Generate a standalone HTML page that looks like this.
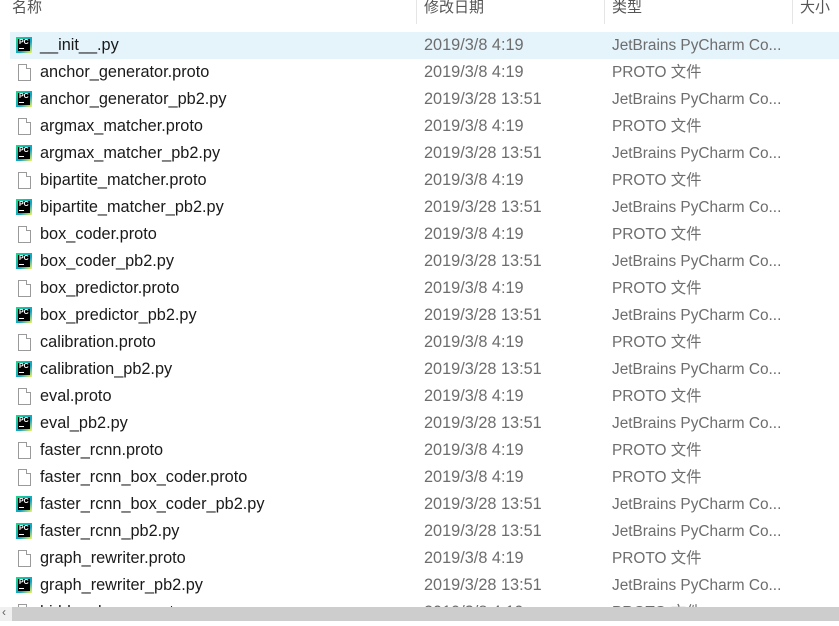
<!DOCTYPE html>
<html><head><meta charset="utf-8"><style>
*{margin:0;padding:0;box-sizing:border-box}
body{width:839px;height:621px;overflow:hidden;background:#fff;font-family:"Liberation Sans","Noto Sans CJK SC",sans-serif;font-size:16.3px;color:#333;position:relative}
.h{position:absolute;top:-1px;height:24px;color:#555;font-size:15px;line-height:18px}
.sep{position:absolute;top:0;width:1px;height:24px;background:#e5e5e5}
.r{position:absolute;left:0;width:839px;height:27px;line-height:27px;white-space:nowrap}
.r.sel{background:#e5f3fb;left:10px;width:829px}
.n{position:absolute;left:40px;color:#1a1a1a}
.sel .n{left:30px}.sel .d{left:414px}.sel .t{left:602px}.sel .ic{left:6px}
.d{position:absolute;left:424px;color:#6d6d6d}
.t{position:absolute;left:612px;color:#6d6d6d;font-size:15.4px}
.ic{position:absolute;left:16px;top:5px;width:16px;height:16px}
.pc{background:linear-gradient(135deg,#21d789,#0ea5c8 60%,#fcf84a);padding:2px}
.pc i{display:block;width:12px;height:12px;background:#000;color:#fff;font-size:7px;font-style:normal;font-weight:bold;line-height:8px;padding-left:1px;position:relative}
.pc i:after{content:"";position:absolute;left:1px;bottom:2px;width:5px;height:1px;background:#fff}
.fi{left:18px;width:13px;height:17px;border:1px solid #9a9a9a;background:#fff}
.fi:after{content:"";position:absolute;right:-1px;top:-1px;width:4px;height:4px;background:#fff;border-left:1px solid #9a9a9a;border-bottom:1px solid #9a9a9a}
.sb{position:absolute;left:0;top:607px;width:839px;height:14px;background:#f0f0f0}
.th{position:absolute;left:12px;top:607px;width:827px;height:14px;background:#cdcdcd}
.arr{position:absolute;left:2px;top:605px;font-size:12px;color:#606060}
</style></head><body>
<div class="h" style="left:12px">名称</div>
<div class="sep" style="left:416px"></div>
<div class="h" style="left:424px">修改日期</div>
<div class="sep" style="left:604px"></div>
<div class="h" style="left:612px">类型</div>
<div class="sep" style="left:792px"></div>
<div class="h" style="left:800px">大小</div>
<div class="r sel" style="top:32px"><span class="ic pc"><i>PC</i></span><span class="n">__init__.py</span><span class="d">2019/3/8 4:19</span><span class="t">JetBrains PyCharm Co...</span></div>
<div class="r" style="top:59px"><span class="ic fi"></span><span class="n">anchor_generator.proto</span><span class="d">2019/3/8 4:19</span><span class="t">PROTO 文件</span></div>
<div class="r" style="top:86px"><span class="ic pc"><i>PC</i></span><span class="n">anchor_generator_pb2.py</span><span class="d">2019/3/28 13:51</span><span class="t">JetBrains PyCharm Co...</span></div>
<div class="r" style="top:113px"><span class="ic fi"></span><span class="n">argmax_matcher.proto</span><span class="d">2019/3/8 4:19</span><span class="t">PROTO 文件</span></div>
<div class="r" style="top:140px"><span class="ic pc"><i>PC</i></span><span class="n">argmax_matcher_pb2.py</span><span class="d">2019/3/28 13:51</span><span class="t">JetBrains PyCharm Co...</span></div>
<div class="r" style="top:167px"><span class="ic fi"></span><span class="n">bipartite_matcher.proto</span><span class="d">2019/3/8 4:19</span><span class="t">PROTO 文件</span></div>
<div class="r" style="top:194px"><span class="ic pc"><i>PC</i></span><span class="n">bipartite_matcher_pb2.py</span><span class="d">2019/3/28 13:51</span><span class="t">JetBrains PyCharm Co...</span></div>
<div class="r" style="top:221px"><span class="ic fi"></span><span class="n">box_coder.proto</span><span class="d">2019/3/8 4:19</span><span class="t">PROTO 文件</span></div>
<div class="r" style="top:248px"><span class="ic pc"><i>PC</i></span><span class="n">box_coder_pb2.py</span><span class="d">2019/3/28 13:51</span><span class="t">JetBrains PyCharm Co...</span></div>
<div class="r" style="top:275px"><span class="ic fi"></span><span class="n">box_predictor.proto</span><span class="d">2019/3/8 4:19</span><span class="t">PROTO 文件</span></div>
<div class="r" style="top:302px"><span class="ic pc"><i>PC</i></span><span class="n">box_predictor_pb2.py</span><span class="d">2019/3/28 13:51</span><span class="t">JetBrains PyCharm Co...</span></div>
<div class="r" style="top:329px"><span class="ic fi"></span><span class="n">calibration.proto</span><span class="d">2019/3/8 4:19</span><span class="t">PROTO 文件</span></div>
<div class="r" style="top:356px"><span class="ic pc"><i>PC</i></span><span class="n">calibration_pb2.py</span><span class="d">2019/3/28 13:51</span><span class="t">JetBrains PyCharm Co...</span></div>
<div class="r" style="top:383px"><span class="ic fi"></span><span class="n">eval.proto</span><span class="d">2019/3/8 4:19</span><span class="t">PROTO 文件</span></div>
<div class="r" style="top:410px"><span class="ic pc"><i>PC</i></span><span class="n">eval_pb2.py</span><span class="d">2019/3/28 13:51</span><span class="t">JetBrains PyCharm Co...</span></div>
<div class="r" style="top:437px"><span class="ic fi"></span><span class="n">faster_rcnn.proto</span><span class="d">2019/3/8 4:19</span><span class="t">PROTO 文件</span></div>
<div class="r" style="top:464px"><span class="ic fi"></span><span class="n">faster_rcnn_box_coder.proto</span><span class="d">2019/3/8 4:19</span><span class="t">PROTO 文件</span></div>
<div class="r" style="top:491px"><span class="ic pc"><i>PC</i></span><span class="n">faster_rcnn_box_coder_pb2.py</span><span class="d">2019/3/28 13:51</span><span class="t">JetBrains PyCharm Co...</span></div>
<div class="r" style="top:518px"><span class="ic pc"><i>PC</i></span><span class="n">faster_rcnn_pb2.py</span><span class="d">2019/3/28 13:51</span><span class="t">JetBrains PyCharm Co...</span></div>
<div class="r" style="top:545px"><span class="ic fi"></span><span class="n">graph_rewriter.proto</span><span class="d">2019/3/8 4:19</span><span class="t">PROTO 文件</span></div>
<div class="r" style="top:572px"><span class="ic pc"><i>PC</i></span><span class="n">graph_rewriter_pb2.py</span><span class="d">2019/3/28 13:51</span><span class="t">JetBrains PyCharm Co...</span></div>
<div class="r" style="top:599px"><span class="ic fi"></span><span class="n">hidden_layers.proto</span><span class="d">2019/3/8 4:19</span><span class="t">PROTO 文件</span></div>
<div class="sb"></div><div class="th"></div><div class="arr">&lsaquo;</div>
</body></html>
